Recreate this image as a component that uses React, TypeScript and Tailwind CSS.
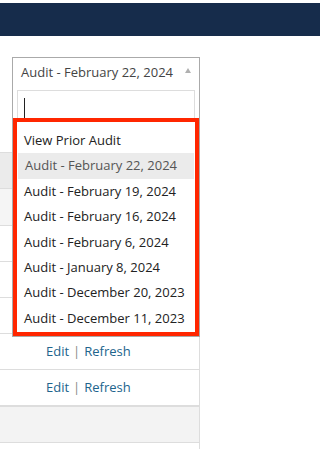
const AUDITS = [
  "View Prior Audit",
  "Audit - February 22, 2024",
  "Audit - February 19, 2024",
  "Audit - February 16, 2024",
  "Audit - February 6, 2024",
  "Audit - January 8, 2024",
  "Audit - December 20, 2023",
  "Audit - December 11, 2023",
];

function ActionLinks() {
  return (
    <div className="flex items-center h-full pl-[46px] text-[13px] text-[#21648c]">
      <span>Edit</span>
      <span className="px-[4px] text-[#888]">|</span>
      <span>Refresh</span>
    </div>
  );
}

export default function App() {
  return (
    <div
      className="relative w-full h-[449px] bg-white overflow-hidden"
      style={{ fontFamily: '"Open Sans", "Liberation Sans", sans-serif' }}
    >
      <div className="h-[3px]" />
      <header className="h-[33px] bg-[#162c4b]" />

      {/* table behind the dropdown */}
      <div className="mt-[116px] w-[200px] border-r border-[#ddd]">
        <div className="h-[36px] border-t border-[#ddd] bg-[#ebebeb]" />
        <div className="h-[37px] border-t border-[#ddd] bg-[#f5f5f5]" />
        <div className="h-[36px] border-t border-[#ddd]" />
        <div className="h-[36px] border-t border-[#ddd]" />
        <div className="h-[36px] border-t border-[#ddd]" />
        <div className="h-[36px] border-t border-[#ddd]">
          <ActionLinks />
        </div>
        <div className="h-[36px] border-t border-[#ddd]">
          <ActionLinks />
        </div>
        <div className="h-[37px] border-t-2 border-[#ddd] bg-[#f3f3f3]" />
        <div className="h-[10px] border-t border-[#ddd]" />
      </div>

      {/* open select */}
      <div className="absolute left-[12px] top-[57px] w-[188px] border border-[#aaa] bg-white">
        <div className="flex items-center justify-between h-[29px] pl-[8px] pr-[8px] text-[13px] text-[#444]">
          <span>Audit - February 22, 2024</span>
          <span className="w-0 h-0 border-x-[3px] border-x-transparent border-b-[5px] border-b-[#b0b0b0] mb-[4px]" />
        </div>
        <div className="px-[4px] pt-[3px]">
          <div className="h-[28px] border border-b-0 border-[#ddd] pl-[6px] pt-[7px]">
            <div className="w-px h-[20px] bg-[#222]" />
          </div>
        </div>
        <div className="border-[4px] border-[#ff2600] pt-[6px] pb-[1px]">
          {AUDITS.map((a, i) => (
            <div
              key={a}
              className={`flex items-center h-[25.4px] pl-[7px] text-[13px] ${
                i === 1 ? "bg-[#ebebeb] text-[#555] mx-px pl-[6px]" : "text-[#222]"
              }`}
            >
              {a}
            </div>
          ))}
        </div>
      </div>
    </div>
  );
}
